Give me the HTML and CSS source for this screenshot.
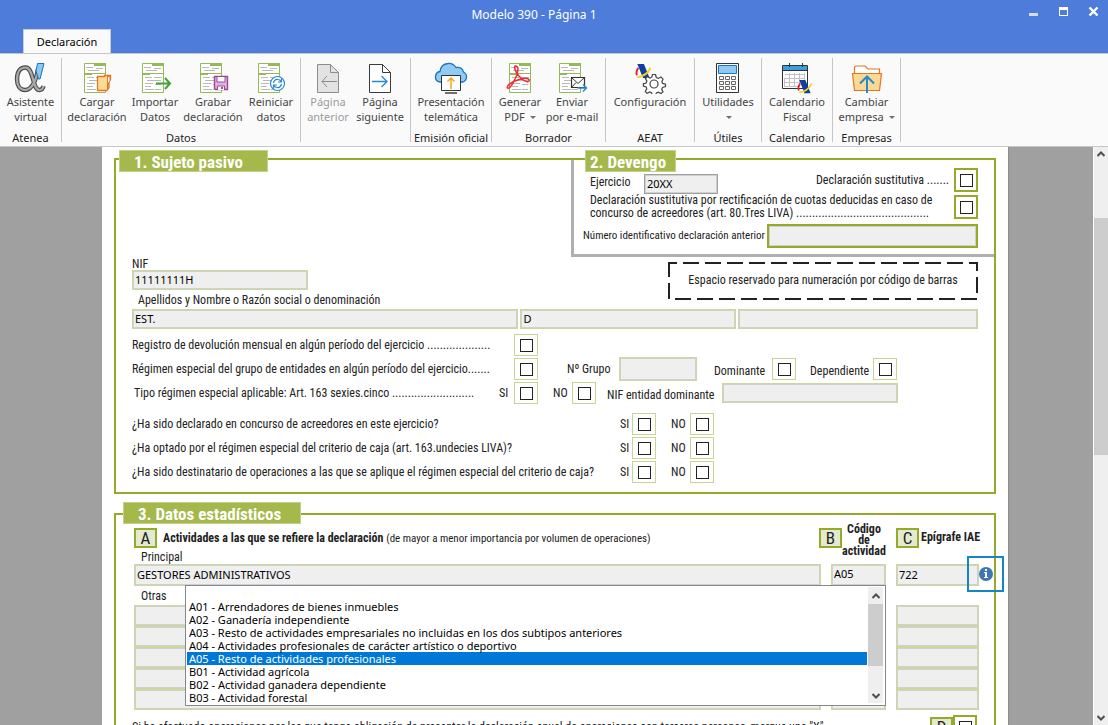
FILE: index.html
```html
<!DOCTYPE html>
<html lang="es">
<head>
<meta charset="utf-8">
<meta name="viewport" content="width=device-width, initial-scale=1">
<title>Modelo 390 - Página 1</title>
<link rel="stylesheet" href="styles.css">
</head>
<body>
<svg class="defs" aria-hidden="true">
  <symbol id="doc" viewBox="0 0 36 32">
    <path d="M5.500 1.500h21v29h-21z" fill="#fff" stroke="#97b955"/>
    <path d="M15 1h12v3h-12zM5 11h22v1H13v1H5z" fill="#97b955"/>
    <path d="M7 5.500h7M9 8.500h11M17 6.500h7M8 15.500h7M17 15.500h8M10 18.500h6M8 21.500h8M8 24.500h6M8 27.500h9M16 18.500h8M18 22.500h6M18 27.500h6" stroke="#b9b9b9"/>
  </symbol>
  <symbol id="agency" viewBox="0 0 16 16">
    <path d="M2 0h7l6 15H8z" fill="#0c3f9f"/>
    <path d="M3 4Q0 8 1.500 12" fill="none" stroke="#e5202b" stroke-width="2"/>
    <path d="M2 14Q12 13 16 4" fill="none" stroke="#fbd016" stroke-width="2"/>
  </symbol>
</svg>

<header class="titlebar">
  <div class="title-row">
    <h1 class="title">Modelo 390 - Página 1</h1>
    <div class="window-controls">
      <button class="win-btn" type="button" aria-label="Minimizar"><svg viewBox="0 0 11 11"><path d="M1 7h9v3H1z" fill="#d9dce4"/></svg></button>
      <button class="win-btn" type="button" aria-label="Maximizar"><svg viewBox="0 0 11 11"><path d="M1 1h9v9H1zM2 4v5h7V4z" fill="#fff" fill-rule="evenodd"/></svg></button>
      <button class="win-btn" type="button" aria-label="Cerrar"><svg viewBox="0 0 11 11"><path d="M1.500 1.500l8 8M9.500 1.500l-8 8" stroke="#fff" stroke-width="2.400"/></svg></button>
    </div>
  </div>
  <nav class="tabs"><button class="tab" type="button">Declaración</button></nav>
</header>

<div class="ribbon">
  <section class="group g-atenea">
    <div class="tools">
      <button class="tool" type="button"><svg class="icon" viewBox="0 0 36 32"><path d="M25 7C24 15 20 28 12 28C6.500 28 4 23 4 17C4 10 7 5.500 12.500 5.500C21 5.500 19 28 26.500 28C29 28 30 26 30.500 24" fill="none" stroke="#4b4b4b" stroke-width="4.400"/><path d="M25 7C24 15 20 28 12 28C6.500 28 4 23 4 17C4 10 7 5.500 12.500 5.500C21 5.500 19 28 26.500 28C29 28 30 26 30.500 24" fill="none" stroke="#aaa" stroke-width="2.200"/><path d="M24.500 1.500h6.500L27 17h-1.500l-2.500-8z" fill="#8dc8f2" stroke="#1873b9"/></svg><span>Asistente<br>virtual</span></button>
    </div>
    <h2 class="group-name">Atenea</h2>
  </section>
  <section class="group g-datos">
    <div class="tools">
      <button class="tool" type="button"><svg class="icon" viewBox="0 0 36 32"><use href="#doc"/><path d="M18.500 14.500h7v-1h6v4l-1.500 2v6l-2 3h-9.500z" fill="#ffdc94" stroke="#e67425" stroke-width="1.300"/><path d="M28.500 14v13l1-6 1.500-2v-4z" fill="#fff" stroke="#e67425"/></svg><span>Cargar<br>declaración</span></button>
      <button class="tool" type="button"><svg class="icon" viewBox="0 0 36 32"><use href="#doc"/><path d="M19 21.500h14M28 16l5 5.500l-5 5.500" fill="none" stroke="#3da536" stroke-width="2"/></svg><span>Importar<br>Datos</span></button>
      <button class="tool" type="button"><svg class="icon" viewBox="0 0 36 32"><use href="#doc"/><path d="M19.500 14.500h13v13h-12l-1-1z" fill="#dfb4dc" stroke="#9c4a98" stroke-width="1.400"/><path d="M22 15v5h8v-5M22.500 28v-4h7v4" fill="#fff" stroke="#9c4a98"/><path d="M26 25h2v2h-2z" fill="#9c4a98"/></svg><span>Grabar<br>declaración</span></button>
      <button class="tool" type="button"><svg class="icon" viewBox="0 0 36 32"><use href="#doc"/><circle cx="24.500" cy="21.500" r="7" fill="#fff" stroke="#2689cd" stroke-width="1.200"/><path d="M20.500 21q1-4 4.500-3.500q2 0 3 2M28.500 16.500v3.500h-3.500M28.500 22q-1 4-4.500 3.500q-2 0-3-2M20.500 26.500V23H24" fill="none" stroke="#2689cd" stroke-width="1.200"/></svg><span>Reiniciar<br>datos</span></button>
    </div>
    <h2 class="group-name">Datos</h2>
  </section>
  <section class="group g-paginas">
    <div class="tools">
      <button class="tool tool-narrow" type="button" disabled><svg class="icon" viewBox="0 0 36 32"><path d="M7.500 2.500h13l8 8v20h-21z" fill="#e2e2e2" stroke="#8d8d8d"/><path d="M20.500 2.500v8h8M12 19.500h15M17 14l-5 5.500l5 5.500" fill="none" stroke="#8d8d8d"/></svg><span>Página<br>anterior</span></button>
      <button class="tool tool-narrow" type="button"><svg class="icon" viewBox="0 0 36 32"><path d="M7.500 2.500h13l8 8v20h-21z" fill="#fff" stroke="#3b3b3b"/><path d="M20.500 2.500v8h8" fill="none" stroke="#3b3b3b"/><path d="M10 19.500h15M19.500 14l5.500 5.500l-5.500 5.500" fill="none" stroke="#2689cd" stroke-width="1.300"/></svg><span>Página<br>siguiente</span></button>
    </div>
  </section>
  <section class="group g-emision">
    <div class="tools">
      <button class="tool tool-wide" type="button"><svg class="icon" viewBox="0 0 36 32"><path d="M7 20Q2 19 2.500 14.500Q3 10 7 9.500Q8 2 15 1.500Q20 1 23 5.500Q29 4.500 30.500 10Q34 12 33.500 15.500Q33 19 30 20z" fill="#91caf2" stroke="#1b76bd" stroke-width="1.300"/><path d="M8.500 13.500h19v15h-19z" fill="#fff" stroke="#333"/><path d="M12 31h12" stroke="#333" stroke-width="1.400"/><path d="M18 27V16M14.500 19.500L18 16l3.500 3.500" fill="none" stroke="#f4a71f" stroke-width="1.500"/></svg><span>Presentación<br>telemática</span></button>
    </div>
    <h2 class="group-name">Emisión oficial</h2>
  </section>
  <section class="group g-borrador">
    <div class="tools">
      <button class="tool tool-narrow" type="button"><svg class="icon" viewBox="0 0 36 32"><use href="#doc" x="2"/><path d="M13 4C17 3 17 10 13 17C10 24 7 27 5.500 26C4 24 9 20 17 17.500C24 15 28 17 27 19C25 21 20 18 16.500 13.500C13 9 12 5 13 4z" fill="none" stroke="#f02b32" stroke-width="1.500"/></svg><span>Generar<br>PDF <i class="caret"></i></span></button>
      <button class="tool tool-narrow" type="button"><svg class="icon" viewBox="0 0 36 32"><use href="#doc"/><path d="M17.500 15.500h13v10h-13z" fill="#fff" stroke="#333" stroke-width="1.200"/><path d="M17.500 15.500l6.500 6l6.500-6M17.500 25.500l4.500-5" fill="none" stroke="#333"/><path d="M23.500 26h9M29 22.500l3.500 3.500l-3.500 3.500" fill="none" stroke="#2689cd" stroke-width="1.400"/></svg><span>Enviar<br>por e-mail</span></button>
    </div>
    <h2 class="group-name">Borrador</h2>
  </section>
  <section class="group g-aeat">
    <div class="tools">
      <button class="tool tool-wide" type="button"><svg class="icon" viewBox="0 0 36 32"><use href="#agency" x="3" y="2" width="16" height="15"/><path d="M20.500 12.500h3l.8 3l2 .9l2.700-1.500l2 2.100l-1.200 2.700l.8 1.700l2.900.8v2.400l-3 .9l-.8 1.800l1.300 2.600l-2 1.600l-2.700-1.400l-1.900.8l-.9 2.600h-3l-.9-2.700l-1.800-.8l-2.800 1.300l-1.700-1.800l1.500-2.600l-.7-1.900l-2.700-.9v-2.300l2.700-.8l.8-1.900l-1.500-2.500l1.900-2l2.600 1.500l1.900-.9z" fill="#fff" stroke="#454545" stroke-width="1.200"/><circle cx="22" cy="22" r="4" fill="none" stroke="#454545" stroke-width="1.200"/></svg><span>Configuración</span></button>
    </div>
    <h2 class="group-name">AEAT</h2>
  </section>
  <section class="group g-utiles">
    <div class="tools">
      <button class="tool" type="button"><svg class="icon" viewBox="0 0 36 32"><path d="M6.500 1.500h22v29h-22z" fill="#fff" stroke="#333"/><path d="M8.500 3.500h18v8h-18z" fill="#90caf2" stroke="#1b76bd"/><path d="M9.500 14.500h4v3h-4zM15.500 14.500h4v3h-4zM21.500 14.500h4v3h-4zM9.500 19.500h4v3h-4zM15.500 19.500h4v3h-4zM21.500 19.500h4v3h-4zM9.500 24.500h4v3h-4zM15.500 24.500h4v3h-4zM21.500 24.500h4v3h-4z" fill="none" stroke="#666"/></svg><span>Utilidades<br><i class="caret"></i></span></button>
    </div>
    <h2 class="group-name">Útiles</h2>
  </section>
  <section class="group g-calendario">
    <div class="tools">
      <button class="tool" type="button"><svg class="icon" viewBox="0 0 36 32"><path d="M3.500 3.500h25v23h-25z" fill="#fff" stroke="#333"/><path d="M4 4h24v4H4z" fill="#38a0da"/><path d="M10.500 1v4M23.500 1v4M3 8.500h26" stroke="#333"/><path d="M6 12.500h20M6 16.500h20M6 20.500h20M6 24.500h14M5.500 16v9M10.500 11v14M15.500 11v14M20.500 11v14M25.500 11v10" stroke="#c3c3c3"/><use href="#agency" x="18" y="18" width="15" height="14"/></svg><span>Calendario<br>Fiscal</span></button>
    </div>
    <h2 class="group-name">Calendario</h2>
  </section>
  <section class="group g-empresas">
    <div class="tools">
      <button class="tool" type="button"><svg class="icon" viewBox="0 0 36 32"><path d="M5.500 12V5l1.500-1h9l3 3h11.500v5" fill="#fff" stroke="#e67425" stroke-width="1.200"/><path d="M3.500 11.500h29l-2 17h-25z" fill="#f9d994" stroke="#e67425" stroke-width="1.200"/><path d="M18 31V15M11 21.500l7-7l7 7" fill="none" stroke="#2689cd" stroke-width="2"/></svg><span>Cambiar<br>empresa <i class="caret"></i></span></button>
    </div>
    <h2 class="group-name">Empresas</h2>
  </section>
</div>

<main class="workspace">
  <div class="desk">
    <form class="page">
      <section class="frame">
        <div class="top">
          <h2 class="heading heading-one">1. Sujeto pasivo</h2>
          <section class="accrual">
            <h2 class="heading heading-two">2. Devengo</h2>
            <div class="line year-line">
              <label class="year-label" for="year">Ejercicio</label>
              <input class="field year" id="year" value="20XX">
              <label class="push" for="sub1">Declaración sustitutiva .......</label>
              <span class="tick strong"><input type="checkbox" id="sub1"></span>
            </div>
            <div class="line rect-line">
              <label class="two-lines" for="sub2">Declaración sustitutiva por rectificación de cuotas deducidas en caso de concurso de acreedores (art. 80.Tres LIVA) ..........................................</label>
              <span class="tick strong"><input type="checkbox" id="sub2"></span>
            </div>
            <div class="line prev-line">
              <label class="fine" for="prev">Número identificativo declaración anterior</label>
              <input class="field strong" id="prev">
            </div>
          </section>
        </div>
        <div class="identity">
          <div class="identity-left">
            <label class="nif-label" for="nif">NIF</label>
            <input class="field nif" id="nif" value="11111111H">
            <label class="name-label" for="surname">Apellidos y Nombre o Razón social o denominación</label>
          </div>
          <p class="barcode"><svg class="dashes" aria-hidden="true"><rect x="1" y="1" width="308" height="36" fill="none" stroke="#222" stroke-width="2" stroke-dasharray="16 6" stroke-dashoffset="8"/></svg>Espacio reservado para numeración por código de barras</p>
        </div>
        <div class="names">
          <input class="field" id="surname" value="EST.">
          <input class="field" aria-label="Nombre" value="D">
          <input class="field" aria-label="Segundo nombre">
        </div>
        <div class="rows">
          <div class="line">
            <label class="question" for="c1">Registro de devolución mensual en algún período del ejercicio ....................</label>
            <span class="tick"><input type="checkbox" id="c1"></span>
          </div>
          <div class="line">
            <label class="question" for="c2">Régimen especial del grupo de entidades en algún período del ejercicio.......</label>
            <span class="tick"><input type="checkbox" id="c2"></span>
            <label class="group-label" for="grp">Nº Grupo</label>
            <input class="field grp" id="grp">
            <label class="after-field" for="dom">Dominante</label>
            <span class="tick"><input type="checkbox" id="dom"></span>
            <label class="dep-label" for="dep">Dependiente</label>
            <span class="tick"><input type="checkbox" id="dep"></span>
          </div>
          <div class="line">
            <span class="question kind">Tipo régimen especial aplicable: Art. 163 sexies.cinco ..........................</span>
            <label class="si" for="t1">SI</label><span class="tick"><input type="checkbox" id="t1"></span>
            <label class="no" for="t2">NO</label><span class="tick"><input type="checkbox" id="t2"></span>
            <label class="ent-label" for="ent">NIF entidad dominante</label>
            <input class="field ent" id="ent">
          </div>
        </div>
        <div class="rows rows-questions">
          <div class="line">
            <span class="question long">¿Ha sido declarado en concurso de acreedores en este ejercicio?</span>
            <label class="si" for="q1">SI</label><span class="tick"><input type="checkbox" id="q1"></span>
            <label class="no" for="q2">NO</label><span class="tick"><input type="checkbox" id="q2"></span>
          </div>
          <div class="line">
            <span class="question long">¿Ha optado por el régimen especial del criterio de caja (art. 163.undecies LIVA)?</span>
            <label class="si" for="q3">SI</label><span class="tick"><input type="checkbox" id="q3"></span>
            <label class="no" for="q4">NO</label><span class="tick"><input type="checkbox" id="q4"></span>
          </div>
          <div class="line">
            <span class="question long">¿Ha sido destinatario de operaciones a las que se aplique el régimen especial del criterio de caja?</span>
            <label class="si" for="q5">SI</label><span class="tick"><input type="checkbox" id="q5"></span>
            <label class="no" for="q6">NO</label><span class="tick"><input type="checkbox" id="q6"></span>
          </div>
        </div>
      </section>

      <section class="frame frame-stats">
        <h2 class="heading heading-three">3. Datos estadísticos</h2>
        <div class="columns-head">
          <div class="line"><b class="letter">A</b><p class="activities"><b>Actividades a las que se refiere la declaración</b> <span class="fine">(de mayor a menor importancia por volumen de operaciones)</span></p></div>
          <div class="line code-head"><b class="letter">B</b><b class="code-name">Código<br>de<br>actividad</b></div>
          <div class="line"><b class="letter">C</b><b class="iae-name">Epígrafe IAE</b></div>
        </div>
        <label class="sub-label" for="main">Principal</label>
        <div class="grid main-row">
          <input class="field" id="main" value="GESTORES ADMINISTRATIVOS">
          <select class="field" aria-label="Código de actividad"><option>A05</option></select>
          <input class="field" aria-label="Epígrafe IAE" value="722">
          <button class="info" type="button" aria-label="Información"><svg viewBox="0 0 14 14"><circle cx="7" cy="7" r="7" fill="#3c76b5"/><path d="M6 2h2v2H6zM5 5h3v5h1v1H5v-1h1V6H5z" fill="#fff"/></svg></button>
          <div class="dropdown">
            <ul class="options" role="listbox" aria-label="Códigos de actividad">
              <li class="option" role="option">&nbsp;</li>
              <li class="option" role="option">A01 - Arrendadores de bienes inmuebles</li>
              <li class="option" role="option">A02 - Ganadería independiente</li>
              <li class="option" role="option">A03 - Resto de actividades empresariales no incluidas en los dos subtipos anteriores</li>
              <li class="option" role="option">A04 - Actividades profesionales de carácter artístico o deportivo</li>
              <li class="option selected" role="option" aria-selected="true">A05 - Resto de actividades profesionales</li>
              <li class="option" role="option">B01 - Actividad agrícola</li>
              <li class="option" role="option">B02 - Actividad ganadera dependiente</li>
              <li class="option" role="option">B03 - Actividad forestal</li>
            </ul>
            <div class="scroll scroll-list">
              <svg class="arrow" viewBox="0 0 8 6"><path d="M.500 5L4 1.500L7.500 5" fill="none" stroke="#505050" stroke-width="2"/></svg>
              <span class="thumb"></span>
              <svg class="arrow" viewBox="0 0 8 6"><path d="M.500 1L4 4.500L7.500 1" fill="none" stroke="#505050" stroke-width="2"/></svg>
            </div>
          </div>
        </div>
        <p class="sub-label others">Otras</p>
        <div class="grid">
          <input class="field" aria-label="Otra actividad 1"><input class="field" aria-label="Código 1"><input class="field" aria-label="Epígrafe 1">
          <input class="field" aria-label="Otra actividad 2"><input class="field" aria-label="Código 2"><input class="field" aria-label="Epígrafe 2">
          <input class="field" aria-label="Otra actividad 3"><input class="field" aria-label="Código 3"><input class="field" aria-label="Epígrafe 3">
          <input class="field" aria-label="Otra actividad 4"><input class="field" aria-label="Código 4"><input class="field" aria-label="Epígrafe 4">
          <input class="field" aria-label="Otra actividad 5"><input class="field" aria-label="Código 5"><input class="field" aria-label="Epígrafe 5">
        </div>
        <div class="line third-line">
          <label for="third">Si ha efectuado operaciones por las que tenga obligación de presentar la declaración anual de operaciones con terceras personas, marque una "X"</label>
          <b class="letter push">D</b><span class="tick strong"><input type="checkbox" id="third"></span>
        </div>
      </section>
    </form>
  </div>
  <div class="scroll scroll-page">
    <svg class="arrow" viewBox="0 0 8 6"><path d="M.500 5L4 1.500L7.500 5" fill="none" stroke="#505050" stroke-width="2"/></svg>
    <span class="thumb"></span>
    <svg class="arrow" viewBox="0 0 8 6"><path d="M.500 1L4 4.500L7.500 1" fill="none" stroke="#505050" stroke-width="2"/></svg>
  </div>
</main>
</body>
</html>
```

FILE: styles.css
```css
* { box-sizing: border-box; }

body {
  margin: 0;
  height: 100vh;
  display: flex;
  flex-direction: column;
  overflow: hidden;
  font: 11px/15px "Noto Sans", "Open Sans", sans-serif;
  color: #000;
  background: #a0a0a0;
}

h1, h2, p, ul { margin: 0; padding: 0; font-size: inherit; font-weight: normal; }
button { font: inherit; border: 0; padding: 0; background: none; color: inherit; }
.defs { position: absolute; width: 0; height: 0; }

/* Title bar */
.titlebar { background: #4d7cdb; flex: none; }
.title-row { display: flex; height: 29px; align-items: center; }
.title { flex: 1; padding-left: 40px; text-align: center; color: #fff; font-size: 12px; }
.window-controls { display: flex; gap: 19px; padding-right: 9px; align-self: flex-start; padding-top: 6px; }
.win-btn { width: 11px; height: 11px; }
.win-btn svg { display: block; width: 11px; height: 11px; }
.tabs { display: flex; padding-left: 23px; }
.tab { width: 88px; height: 24px; background: #fafafa; border: 1px solid #c9ccd6; border-bottom: 0; }

/* Ribbon */
.ribbon {
  display: flex;
  flex: none;
  height: 94px;
  padding: 4px 0;
  background: #fafafa;
  border-top: 1px solid #c6c6c6;
  border-bottom: 1px solid #c6c6c6;
}
.group { display: flex; flex-direction: column; border-right: 1px solid #c6c6c6; }
.g-atenea { width: 62px; }
.g-datos { width: 239px; }
.g-datos .tools { padding-left: 6px; }
.g-paginas { width: 110px; }
.g-paginas .tools { padding-right: 3px; }
.g-emision { width: 81px; }
.g-borrador { width: 114px; }
.g-borrador .tools { padding-right: 5px; }
.g-aeat { width: 89px; }
.g-utiles { width: 67px; }
.g-calendario { width: 71px; }
.g-empresas { width: 68px; }
.tools { display: flex; justify-content: center; }
.tool {
  display: flex;
  flex-direction: column;
  align-items: center;
  justify-content: flex-start;
  flex: none;
  width: 58px;
  padding-top: 4px;
  color: #444;
  white-space: nowrap;
}
.tool-narrow { width: 52px; }
.tool-wide { width: 74px; }
.tool:disabled { color: #9b9b9b; }
.icon { width: 36px; height: 32px; display: block; }
.caret {
  display: inline-block;
  border: 3px solid transparent;
  border-top-color: #707070;
  border-bottom: 0;
  margin: 0 0 2px 2px;
}
.group-name { margin-top: auto; text-align: center; color: #222; white-space: nowrap; line-height: 9px; }

/* Work area */
.workspace { flex: 1; display: flex; min-height: 0; }
.desk { flex: 1; padding: 0 84px 0 102px; min-width: 0; overflow: hidden; }
.page {
  background: #fff;
  padding: 11px 12px 40px 12px;
  font-family: "Roboto Condensed", "Liberation Sans Narrow", Roboto, sans-serif;
  font-size: 12px;
  line-height: 14px;
  color: #222;
  border-right: 1px solid #8c8c8c;
}
.fine { font-size: 11px; }
.scroll { display: flex; flex-direction: column; align-items: center; background: #efefef; }
.scroll .arrow { width: 8px; height: 6px; flex: none; }
.scroll .thumb { width: 100%; background: #cdcdcd; }
.scroll-page { width: 15px; border-left: 1px solid #fff; padding: 4px 0; }
.scroll-page .thumb { margin: 61px 0 auto; height: 237px; }
.scroll-list { width: 15px; padding: 6px 0 4px; }
.scroll-list .thumb { margin: 5px 0 auto; height: 62px; }

.frame { border: 2px solid #93ab28; }
.heading {
  height: 22px;
  margin-top: -10px;
  padding: 1px 0 0 14px;
  background: #a4b84b;
  border: 1px solid #c3d088;
  color: #fff;
  font-size: 17px;
  line-height: 20px;
  font-weight: bold;
}
.heading-one { width: 149px; margin-left: 3px; }
.heading-two { width: 91px; margin-left: 11px; padding-left: 4px; }
.heading-three { width: 178px; margin-left: 7px; margin-top: -13px; }

.line { display: flex; align-items: center; white-space: nowrap; }
.push { margin-left: auto; }
.field {
  font: 11px/14px "Noto Sans", "Open Sans", sans-serif;
  height: 20px;
  min-width: 0;
  width: 100%;
  margin: 0;
  padding: 0 2px 2px;
  color: #000;
  background: #efefef;
  border: 1px solid #cdd89c;
  border-radius: 0;
  box-shadow: inset 0 0 0 1px #d0d0d0;
  appearance: none;
}
.field.strong { border: 2px solid #93ab28; }
.tick {
  display: flex;
  flex: none;
  align-items: center;
  justify-content: center;
  width: 24px;
  height: 22px;
  border: 1px solid #c8d494;
}
.tick.strong { border: 2px solid #93ab28; height: 24px; }
.tick input { appearance: none; width: 13px; height: 13px; margin: 0; border: 1px solid #222; background: #fff; }

.top { display: flex; align-items: flex-start; justify-content: space-between; }
.accrual { width: 423px; height: 97px; border: 3px solid #b0b0b0; border-top: 0; border-right: 0; }
.accrual .line { padding-right: 16px; }
.accrual .year-line { height: 20px; margin-top: -2px; padding-left: 16px; }
.year-label { width: 42px; padding-top: 4px; }
.field.year { width: 74px; margin: 4px 0 0 12px; border-color: #a0a0a0; align-self: flex-start; }
.year-line .tick { margin-left: 5px; }
.accrual .rect-line { height: 26px; padding-left: 16px; margin-top: 4px; }
.two-lines { width: 360px; line-height: 13px; white-space: normal; }
.rect-line .tick { margin-left: auto; }
.accrual .prev-line { height: 24px; padding-left: 9px; margin-top: 4px; gap: 2px; }
.prev-line .field { width: auto; flex: 1; height: 24px; }

.identity { display: flex; justify-content: space-between; padding: 0 16px; }
.identity-left { display: flex; flex-direction: column; }
.nif-label { height: 13px; }
.field.nif { width: 176px; }
.name-label { height: 19px; padding: 3px 0 0 6px; }
.barcode {
  position: relative;
  width: 310px;
  height: 38px;
  margin-top: 5px;
  line-height: 36px;
  text-align: center;
  white-space: nowrap;
}
.dashes { position: absolute; inset: 0; width: 310px; height: 38px; }
.names { display: grid; grid-template-columns: 386fr 215fr 240fr; gap: 2px; padding: 0 16px; }

.rows { padding: 5px 16px 0; display: grid; gap: 2px; }
.rows-questions { padding-top: 9px; padding-bottom: 9px; }
.question { width: 382px; flex: none; }
.question.kind { width: 367px; padding-left: 2px; }
.question.long { width: 488px; }
.si { width: 12px; margin-right: 3px; }
.question.long + .si { margin-right: 0; }
.no { width: 15px; margin: 0 4px 0 15px; }
.group-label { margin: 0 7px 0 29px; width: 45px; }
.field.grp { width: 78px; height: 24px; margin: -1px 0; }
.after-field { margin-left: 17px; width: 58px; padding-top: 4px; }
.dep-label { margin-left: 14px; width: 63px; padding-top: 4px; }
.ent-label { margin-left: 11px; width: 115px; padding-top: 4px; }
.field.ent { width: 176px; }

.frame-stats { margin-top: 19px; padding-bottom: 20px; }
.columns-head { display: grid; grid-template-columns: 1fr 77px 83px; padding: 0 15px 0 18px; height: 26px; }
.columns-head > .line { align-items: flex-start; padding-top: 4px; }
.letter {
  display: flex;
  align-items: center;
  justify-content: center;
  width: 23px;
  height: 20px;
  flex: none;
  background: #e4ead0;
  border: 2px solid #93ab28;
  font-size: 17px;
  font-weight: normal;
}
.activities { padding: 3px 0 0 6px; }
.columns-head .code-head { padding-top: 0; }
.code-head .letter { margin-top: 4px; }
.code-name { line-height: 11px; text-align: center; width: 44px; }
.iae-name { padding: 2px 0 0 2px; }
.sub-label { display: block; padding-left: 25px; height: 14px; }
.grid { display: grid; grid-template-columns: 1fr 55px 83px; column-gap: 10px; padding: 0 15px 0 18px; }
.grid .field { height: 21px; }
.main-row { position: relative; }
.main-row .field { height: 22px; }
.others { height: 19px; padding-top: 3px; }
.info {
  position: absolute;
  right: -10px;
  top: -8px;
  width: 37px;
  height: 36px;
  border: 2px solid #1585c8;
  padding-left: 1px;
}
.info svg { width: 14px; height: 14px; display: block; margin: auto; }
.dropdown {
  position: absolute;
  left: 69px;
  right: 108px;
  top: 21px;
  z-index: 1;
  display: flex;
  height: 121px;
  padding: 1px 2px 2px 1px;
  background: #fff;
  border: 1px solid #828790;
  color: #000;
  font: 11px/13px "Noto Sans", "Open Sans", sans-serif;
}
.options { flex: 1; list-style: none; }
.option { height: 13px; padding-left: 2px; white-space: nowrap; margin-right: 1px; }
.option.selected { background: #0078d7; color: #fff; }
.third-line { padding: 5px 17px 0 16px; }
```
